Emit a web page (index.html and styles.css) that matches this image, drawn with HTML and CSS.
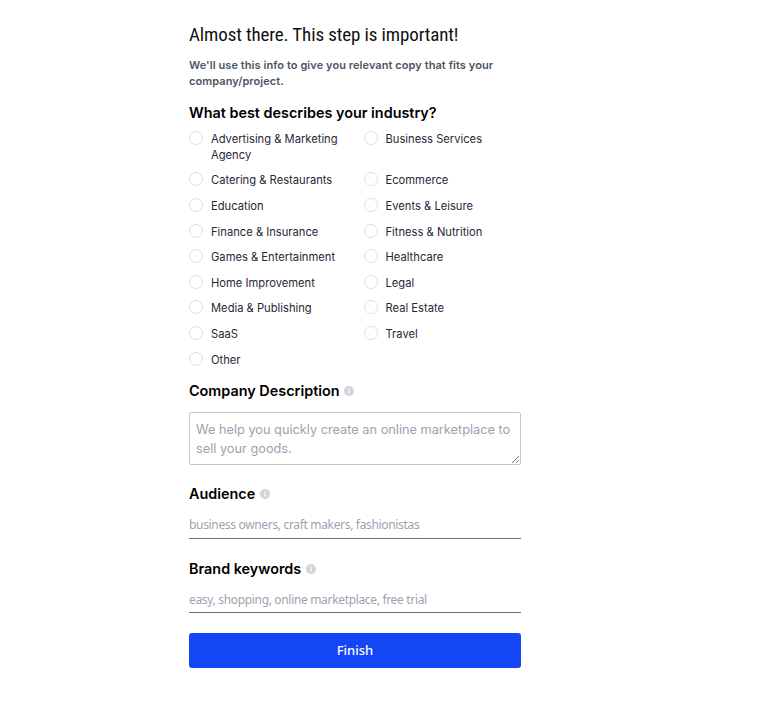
FILE: index.html
```html
<!DOCTYPE html>
<html>
    <head>
        <title>Almost there</title>
        <link rel="stylesheet" href="styles.css">
    </head>
    <body>
        <form class="stepForm">
            <h1 class="stepTitle">Almost there. This step is important!</h1>
            <p class="stepIntro">We'll use this info to give you relevant copy that fits your company/project.</p>

            <h2 class="fieldLabel industryLabel">What best describes your industry?</h2>
            <div class="industryGrid">
                <label class="radioItem"><span class="radioCircle"></span><span>Advertising &amp; Marketing Agency</span></label>
                <label class="radioItem"><span class="radioCircle"></span><span>Business Services</span></label>
                <label class="radioItem"><span class="radioCircle"></span><span>Catering &amp; Restaurants</span></label>
                <label class="radioItem"><span class="radioCircle"></span><span>Ecommerce</span></label>
                <label class="radioItem"><span class="radioCircle"></span><span>Education</span></label>
                <label class="radioItem"><span class="radioCircle"></span><span>Events &amp; Leisure</span></label>
                <label class="radioItem"><span class="radioCircle"></span><span>Finance &amp; Insurance</span></label>
                <label class="radioItem"><span class="radioCircle"></span><span>Fitness &amp; Nutrition</span></label>
                <label class="radioItem"><span class="radioCircle"></span><span>Games &amp; Entertainment</span></label>
                <label class="radioItem"><span class="radioCircle"></span><span>Healthcare</span></label>
                <label class="radioItem"><span class="radioCircle"></span><span>Home Improvement</span></label>
                <label class="radioItem"><span class="radioCircle"></span><span>Legal</span></label>
                <label class="radioItem"><span class="radioCircle"></span><span>Media &amp; Publishing</span></label>
                <label class="radioItem"><span class="radioCircle"></span><span>Real Estate</span></label>
                <label class="radioItem"><span class="radioCircle"></span><span>SaaS</span></label>
                <label class="radioItem"><span class="radioCircle"></span><span>Travel</span></label>
                <label class="radioItem"><span class="radioCircle"></span><span>Other</span></label>
            </div>

            <h2 class="fieldLabel descriptionLabel">Company Description
                <svg class="infoIcon" viewBox="0 0 10 10"><circle cx="5" cy="5" r="5" fill="#d1d5db"/><rect x="4.4" y="4.2" width="1.2" height="3.4" fill="#fff"/><rect x="4.4" y="2.4" width="1.2" height="1.2" fill="#fff"/></svg>
            </h2>
            <div class="descriptionBox">We help you quickly create an online marketplace to sell your goods.
                <svg class="resizeGrip" viewBox="0 0 9 9"><path d="M1 8 L8 1 M5 8 L8 5" stroke="#555" stroke-width="0.8" fill="none"/></svg>
            </div>

            <h2 class="fieldLabel audienceLabel">Audience
                <svg class="infoIcon" viewBox="0 0 10 10"><circle cx="5" cy="5" r="5" fill="#d1d5db"/><rect x="4.4" y="4.2" width="1.2" height="3.4" fill="#fff"/><rect x="4.4" y="2.4" width="1.2" height="1.2" fill="#fff"/></svg>
            </h2>
            <div class="lineInput">business owners, craft makers, fashionistas</div>

            <h2 class="fieldLabel keywordsLabel">Brand keywords
                <svg class="infoIcon" viewBox="0 0 10 10"><circle cx="5" cy="5" r="5" fill="#d1d5db"/><rect x="4.4" y="4.2" width="1.2" height="3.4" fill="#fff"/><rect x="4.4" y="2.4" width="1.2" height="1.2" fill="#fff"/></svg>
            </h2>
            <div class="lineInput keywordsInput">easy, shopping, online marketplace, free trial</div>

            <button class="finishButton" type="button">Finish</button>
        </form>
    </body>
</html>
```

FILE: styles.css
```css
body {
    margin: 0;
    background-color: #fff;
    font-family: Inter, "Liberation Sans", sans-serif;
    color: #000;
}

.stepForm {
    width: 332px;
    margin-left: 189px;
    padding-top: 23px;
}

.stepTitle {
    margin: 0;
    font-family: Roboto, sans-serif;
    font-size: 19px;
    font-stretch: 75%;
    letter-spacing: -0.12px;
    line-height: 24px;
    font-weight: 400;
    color: #111;
}

.stepIntro {
    margin: 10px 0 0 0;
    font-size: 11px;
    letter-spacing: 0.07px;
    line-height: 16px;
    font-weight: 600;
    color: #4b5563;
}

.fieldLabel {
    margin: 0;
    display: flex;
    align-items: center;
    gap: 5px;
    font-size: 14.4px;
    line-height: 20px;
    font-weight: 600;
    color: #000;
}

.industryLabel {
    margin-top: 14px;
}

.descriptionLabel {
    margin-top: 13.2px;
}

.audienceLabel {
    margin-top: 19px;
}

.keywordsLabel {
    margin-top: 20px;
}

.infoIcon {
    width: 10px;
    height: 10px;
    margin-left: -0.5px;
}

.industryGrid {
    display: grid;
    grid-template-columns: 174.5px 1fr;
    row-gap: 9.6px;
    margin-top: 7.8px;
    padding-right: 24px;
}

.radioItem {
    display: flex;
    align-items: flex-start;
    gap: 8px;
    font-size: 11.2px;
    line-height: 16px;
    color: #1f2937;
}

.radioCircle {
    flex: none;
    width: 12px;
    height: 12px;
    border: 1px solid #dcdfe3;
    border-radius: 50%;
    background-color: #fff;
}

.descriptionBox {
    position: relative;
    box-sizing: border-box;
    height: 53px;
    margin-top: 11px;
    padding: 7px 6px;
    border: 1px solid #c4c8ce;
    border-radius: 2px;
    font-size: 12.75px;
    line-height: 19px;
    color: #9ca3af;
}

.resizeGrip {
    position: absolute;
    right: 0;
    bottom: 0;
    width: 9px;
    height: 9px;
}

.lineInput {
    margin-top: 10px;
    height: 24px;
    border-bottom: 1px solid #6b7280;
    font-family: "Noto Sans", "Open Sans", sans-serif;
    font-size: 12px;
    letter-spacing: -0.33px;
    line-height: 22px;
    color: #9ca3af;
}

.keywordsInput {
    height: 23px;
}

.finishButton {
    display: block;
    width: 100%;
    height: 35px;
    margin-top: 20px;
    border: 0;
    border-radius: 3px;
    background-color: #1546f5;
    font-family: "Noto Sans", "Open Sans", sans-serif;
    font-size: 13px;
    font-weight: 500;
    color: #fff;
}
```
